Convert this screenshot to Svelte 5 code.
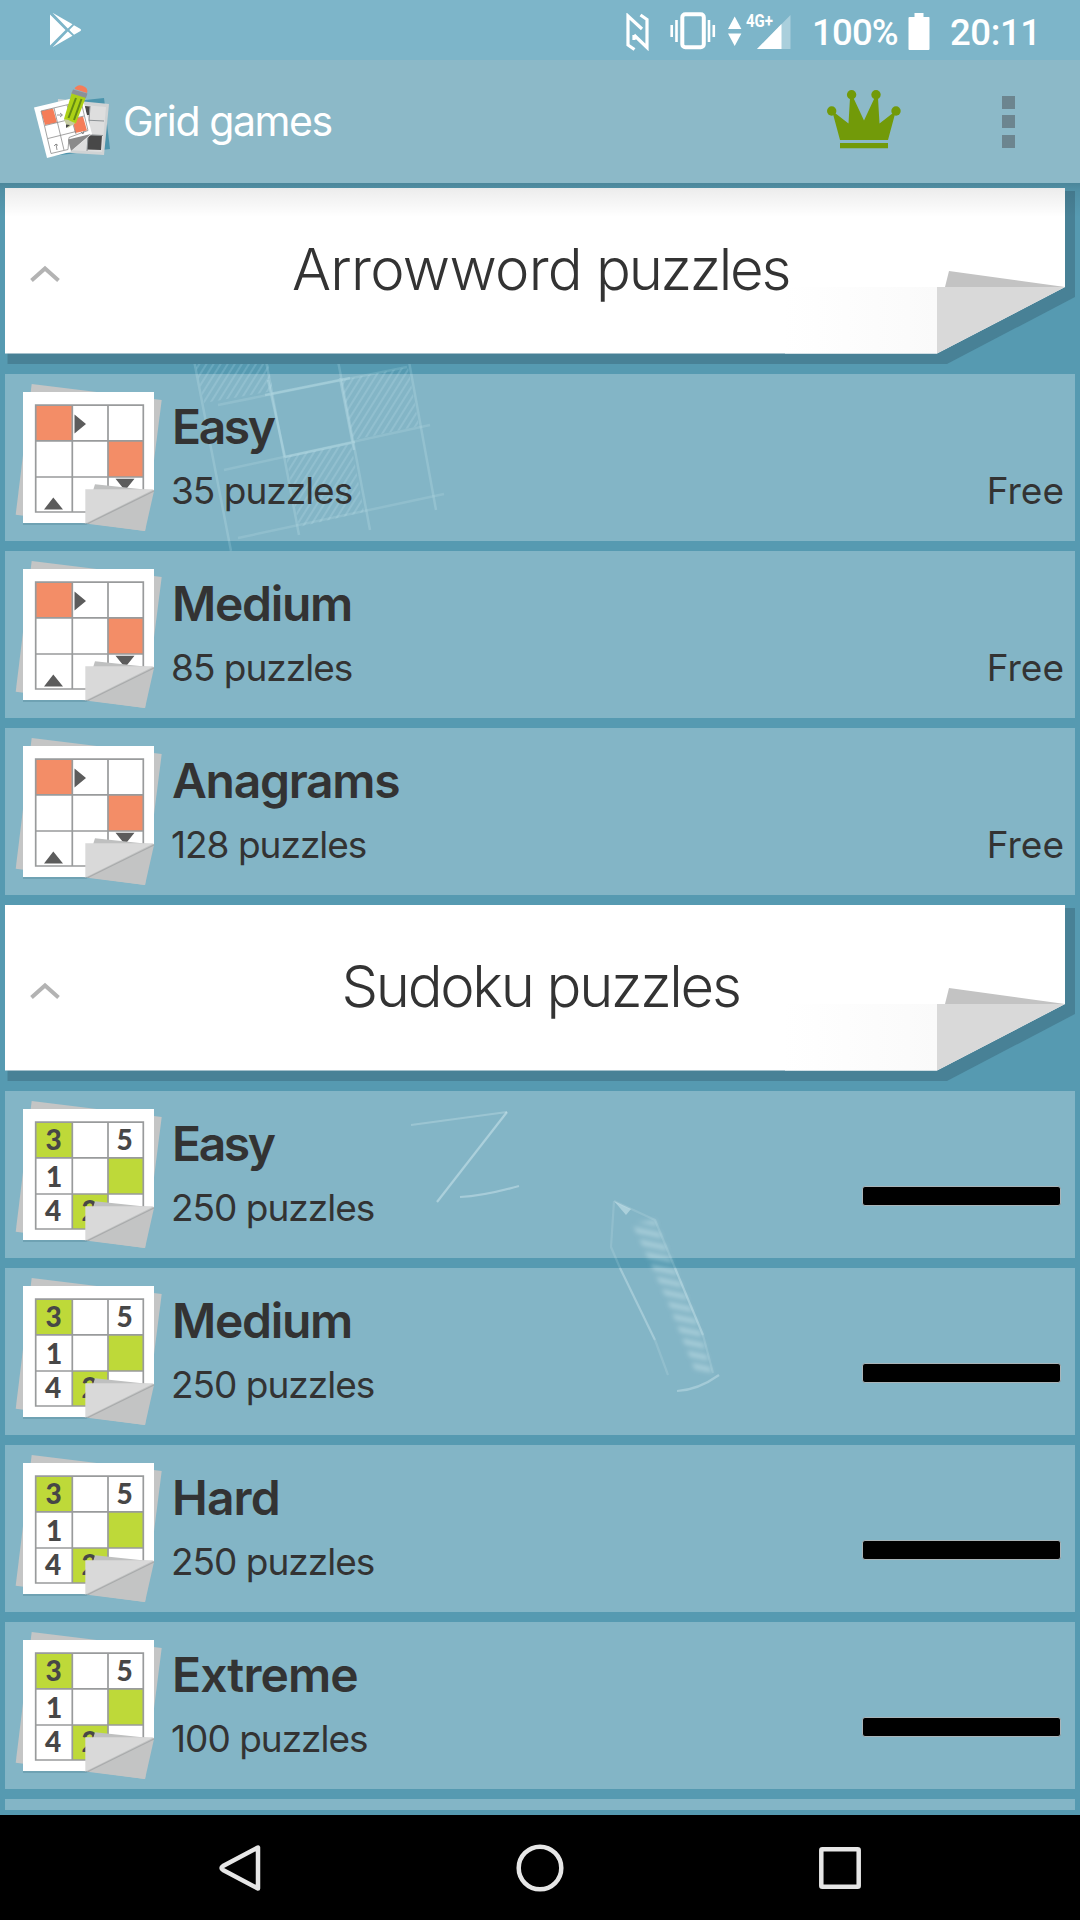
<script>
  const sections = [
    {
      title: 'Arrowword',
      kind: 'arrow',
      packs: [
        { name: 'Easy', count: 35, free: true },
        { name: 'Medium', count: 85, free: true },
        { name: 'Anagrams', count: 128, free: true }
      ]
    },
    {
      title: 'Sudoku',
      kind: 'sudoku',
      packs: [
        { name: 'Easy', count: 250 },
        { name: 'Medium', count: 250 },
        { name: 'Hard', count: 250 },
        { name: 'Extreme', count: 100 }
      ]
    }
  ];

  let open = $state([true, true]);

  function toggle(i) {
    open[i] = !open[i];
  }
</script>

{#snippet packIcon(kind)}
  <svg class="pack-icon" viewBox="0 0 165 167">
    <path d="M26.7 10 156.7 26 140 157 10.7 140.7z" fill="#c4c5c5" />
    <path d="M18 20h131v97L81 151H18z" fill="#4a7f90" opacity=".35" />
    <path d="M18 18h131v98L81 149H18z" fill="#fff" />
    {#if kind === 'arrow'}
      <path d="M31 31h36v36H31zM103 67h35v36h-35z" fill="#f38d67" />
    {:else}
      <path d="M31 31h36v36H31zM103 67h35v36h-35zM67 103h36v35H67z" fill="#bed939" />
    {/if}
    <path d="M30.7 31.2H138.3V138H30.7zM67.3 31v107M103 31v107M31 66.8h107M31 103h107" fill="none" stroke="#999b9c" stroke-width="1.7" />
    {#if kind === 'arrow'}
      <path d="M69.5 40.5v19L81 50zM110.5 104.8h19L120 116.5zM39 135.5h19L48.3 123.5z" fill="#5c5c5c" />
    {:else}
      <g class="digits">
        <text x="48.5" y="58.5">3</text>
        <text x="119.5" y="58.5">5</text>
        <text x="49" y="95.5">1</text>
        <text x="48" y="130">4</text>
        <text x="84.5" y="130">2</text>
      </g>
    {/if}
    <path d="M81 149V116h68v1L140 157 81 149z" fill="#c3c4c4" />
    <path d="M90 110.3 149 116.5H88z" fill="#bfc0c0" />
    <path d="M80.3 115.3H149L80.3 149.5z" fill="#d9d9d9" />
    <path d="M83 149.5 149 117" stroke="#989b9c" stroke-width="1.3" opacity=".6" />
  </svg>
{/snippet}

<div class="screen">
  <div class="status">
    <svg class="play" width="34" height="36" viewBox="0 0 34 36" fill="#fff">
      <path d="M1 2.5 16.5 18 1 33.5zM3.5.8l20 11.5-4.7 4.2zM3.5 35.2l20-11.5-4.7-4.2zM25 13.3l6.5 3.6q1.3 1.1 0 2.2L25 22.7 20.3 18z" />
    </svg>
    <svg class="nfc" width="24" height="38" viewBox="0 0 24 38" fill="none" stroke="#fff" stroke-width="3.2">
      <path d="M16 16 2 3v29l6.5 4.500M8 22 21 34.500V6.500L14.500 2M8 22v5" />
    </svg>
    <svg class="vibrate" width="46" height="38" viewBox="0 0 46 38" fill="none" stroke="#fff">
      <rect x="12.3" y="2.3" width="21.5" height="33" rx="3" stroke-width="4" />
      <path d="M1.7 13v12M6.5 8v22M39 8v22M43.8 13v12" stroke-width="2.6" />
    </svg>
    <svg class="signal" width="64" height="42" viewBox="0 -4 64 42" fill="#fff">
      <path d="M0 17 6.7 4.5 13.4 17zM0 21.5h13.4L6.7 34z" />
      <path d="M29 37 62.5 3v34z" opacity=".35" />
      <path d="M29 37 53.5 12v25z" />
      <text x="18" y="14.5" textLength="27" lengthAdjust="spacingAndGlyphs">4G+</text>
    </svg>
    <span class="percent">100%</span>
    <svg class="battery" width="22" height="38" viewBox="0 0 22 38" fill="#fff">
      <path d="M6.5 1h9v4H21q.5 0 .5 1v31q0 1-1 1h-19q-1 0-1-1V6q0-1 1-1h5z" />
    </svg>
    <span class="clock">20:11</span>
  </div>

  <header class="appbar">
    <svg class="logo" width="82" height="80" viewBox="30 82 82 80">
      <path d="M76 101l28-3 6 51-58 7z" fill="#4c94ac" />
      <path d="M58 99l51 5-5 51-48-3z" fill="#d0d3d4" />
      <path d="M84 105l22 2-4 45-36-2z" fill="#dedede" />
      <path d="M85 106l5 .5-1 8.500h-3zM88 135l14 .5-1 14.500-14-.5z" fill="#484848" />
      <path d="M90 106l-3 45M84 120l20 1M84 134.500l19 1" stroke="#8d9295" fill="none" />
      <path d="M34 107.500 82 96 92 134 70 152 47 158z" fill="#fff" />
      <path d="M41 111l12-2.500 4 14-12 2.500zM73 119l10-2.500 4 14-12 2.500z" fill="#f57d59" />
      <path d="M41 111l40-9.500 7 29-19 7-1 12-17 4zM54 108l10 42M67 105l9 29M45 125.500l39-9.500M48 138.500l28-7" fill="none" stroke="#8b8b8b" stroke-width=".8" />
      <path d="M57 115h5m-2-2 2.500 2-2.500 2M57 150l-1-6m-2 2 2-2 2 1.500M81 132l2 2 1-3" fill="none" stroke="#777" stroke-width=".8" />
      <path d="M68 139.500 91 134 71 151z" fill="#8a8a8a" />
      <path d="M72 92 86 97 76 123 68 126 64 119z" fill="#acd116" />
      <path d="M76 98 68.500 118M81.500 99 74 120" stroke="#648b14" stroke-width="2" />
      <path d="M64 119l4.500 1 4 2 3 1-8 5z" fill="#c5cca0" />
      <path d="M66 124.500l4 .5-4 3z" fill="#444" />
      <path d="M73 89.500 87.500 93.500 86 98 71.500 93.500z" fill="#8b9099" />
      <path d="M74.500 89q2.500-5 8-3.300 6 2 4.500 7.300z" fill="#f57d59" />
    </svg>
    <h1>Grid games</h1>
    <svg class="crown" width="74" height="60" viewBox="0 0 74 60" fill="#729a09">
      <circle cx="4.7" cy="21" r="4.7" />
      <circle cx="24.6" cy="4.7" r="4.7" />
      <circle cx="49" cy="4.7" r="4.7" />
      <circle cx="69" cy="21" r="4.7" />
      <path d="M13 50 6 24l2-1L21.5 33.5 23 8h3.5L37 30.5 47.5 8H51l1.5 25.5L66 23l2 1-7 26zM13 53h48v5.300H13z" />
    </svg>
    <div class="more"><i></i><i></i><i></i></div>
  </header>

  <main class="list">
    <svg class="sketch" viewBox="0 183 1080 1632" fill="none">
      <defs>
        <pattern id="hatch" width="6" height="6" patternUnits="userSpaceOnUse" patternTransform="rotate(32)">
          <path d="M2 0v6" stroke="#b5e2ee" stroke-width="2" opacity=".2" />
        </pattern>
        <pattern id="shade" width="14" height="11" patternUnits="userSpaceOnUse" patternTransform="rotate(12)">
          <path d="M0 4h14" stroke="#c3e3eb" stroke-width="6" opacity=".4" />
        </pattern>
        <filter id="soft"><feGaussianBlur stdDeviation="2" /></filter>
      </defs>
      <path d="M191 345 265 345 273 391 204 403zM341 380 408 367 419 426 353 440zM286 456 351 444 364 512 299 527z" fill="url(#hatch)" />
      <g stroke="#a5d4e1" stroke-width="2.5">
        <path d="M191 345 231 551M263 345 299 535M335 345 370 530M406 345 436 510" opacity=".28" />
        <path d="M218 405 407 367M224 470 430 425M238 538 444 494" opacity=".22" />
        <path d="M268 380 285 457M340 378 354 450M265 395 350 378M285 457 355 442" opacity=".4" />
      </g>
      <g stroke="#c3e3eb" stroke-width="2.2" stroke-linejoin="round">
        <path d="M411 1125Q463 1118 507 1112" opacity=".3" />
        <path d="M507 1112 437 1202" opacity=".5" />
        <path d="M460 1197Q484 1196 519 1186" opacity=".45" />
        <path d="M614 1201 611 1247 620 1268M614 1201 655 1220 675 1268M703 1335 713 1373M655 1340 668 1375" opacity=".18" />
        <path d="M620 1268 655 1340M675 1268 703 1335M677 1391Q698 1390 719 1375" opacity=".4" />
      </g>
      <path d="M614 1201l17 8-5 6z" fill="#c3e3eb" opacity=".5" />
      <path d="M632 1223 655 1220 700 1330 712 1373 696 1373 667 1300z" fill="url(#shade)" filter="url(#soft)" />
    </svg>

    {#each sections as section, i}
      <button class="section {section.kind}" onclick={() => toggle(i)}>
        <svg class="paper" width="1070" height="176" viewBox="0 0 1070 176">
          <defs>
            <linearGradient id="curl{i}">
              <stop offset="0" stop-color="#fff" />
              <stop offset="1" stop-color="#fafafa" />
            </linearGradient>
          </defs>
          <path d="M2.5 3H1070V109L942 176H2.5z" fill="#488196" />
          <path d="M0 0H1060V99L932 165.5H0z" fill="#fff" />
          <path d="M780 99H932v66.5H780z" fill="url(#curl{i})" />
          <path d="M944 83 1060 99H940z" fill="#c3c3c3" />
          <path d="M932 99h128L932 165.5z" fill="#d9d9d9" />
          <path d={open[i] ? 'M26.5 92.5 40 80.5 53.5 92.5' : 'M26.5 80.5 40 92.5 53.5 80.5'} fill="none" stroke="#b3b3b3" stroke-width="4" />
        </svg>
        <span class="section-title"><span>{section.title}</span> puzzles</span>
      </button>
      {#if open[i]}
        {#each section.packs as pack}
          <div class="pack">
            {@render packIcon(section.kind)}
            <div class="info">
              <strong class={pack.name.toLowerCase()}>{pack.name}</strong>
              <span>{pack.count} puzzles</span>
            </div>
            {#if pack.free}
              <span class="price">Free</span>
            {:else}
              <div class="progress"></div>
            {/if}
          </div>
        {/each}
      {/if}
    {/each}
    <div class="pack"></div>
  </main>

  <nav class="navbar">
    <svg width="50" height="50" viewBox="0 0 50 50"><path d="M43 4.5v41L8 27q-3-2 0-4z" /></svg>
    <svg width="50" height="50" viewBox="0 0 50 50"><circle cx="25" cy="25" r="21.3" /></svg>
    <svg width="50" height="50" viewBox="0 0 50 50"><rect x="6.3" y="6.3" width="37.4" height="37.4" rx="1" /></svg>
  </nav>
</div>

<style>
  :global(body) {
    margin: 0;
    background: #000;
  }

  .screen {
    width: 1080px;
    height: 1920px;
    display: flex;
    flex-direction: column;
    overflow: hidden;
    font-family: Inter, 'Open Sans', sans-serif;
    color: #333;
  }

  svg {
    display: block;
    flex: none;
  }

  .status {
    height: 60px;
    display: flex;
    align-items: center;
    background: #7db5c9;
    color: #fff;
    font-family: Roboto, sans-serif;
    font-size: 36.5px;
    font-weight: 500;
    line-height: 60px;
  }

  .play {
    margin-left: 49px;
  }

  .nfc {
    margin-left: 543px;
    margin-top: 3px;
  }

  .vibrate {
    margin-left: 20px;
    margin-top: 1px;
  }

  .signal {
    margin-left: 12px;
    margin-top: -3px;
  }

  .signal text {
    font-size: 18.5px;
    font-weight: 700;
  }

  .percent {
    width: 96px;
    margin-left: 20px;
    padding-top: 6px;
    white-space: nowrap;
    letter-spacing: -0.8px;
  }

  .battery {
    margin-top: 2px;
  }

  .clock {
    margin-left: 20px;
    padding-top: 6px;
    letter-spacing: -0.4px;
  }

  .appbar {
    height: 123px;
    display: flex;
    align-items: center;
    background: #8cb9c8;
  }

  .logo {
    margin-left: 30px;
  }

  h1 {
    flex: 1;
    margin: -2px 0 0 11px;
    color: #fff;
    font-size: 41px;
    font-weight: 400;
    letter-spacing: -1.4px;
  }

  .crown {
    margin-right: 101px;
    margin-top: -3px;
  }

  .more {
    display: flex;
    flex-direction: column;
    gap: 6.5px;
    margin-right: 65px;
  }

  .more i {
    width: 13px;
    height: 13px;
    background: #6c858f;
  }

  .list {
    position: relative;
    height: 1622px;
    padding: 5px 5px 0;
    border-bottom: 5px solid #569ab1;
    background: #569ab1;
    overflow: hidden;
    display: flex;
    flex-direction: column;
    gap: 10px;
  }

  .list::after {
    content: '';
    position: absolute;
    inset: 0 0 auto;
    height: 34px;
    background: linear-gradient(rgba(0, 0, 0, 0.13), rgba(0, 0, 0, 0.07) 20%, transparent);
    pointer-events: none;
  }

  .sketch {
    position: absolute;
    left: 0;
    top: 0;
    width: 1080px;
    height: 1632px;
  }

  .section {
    display: grid;
    flex: none;
    width: 1070px;
    height: 176px;
    padding: 0;
    border: 0;
    background: none;
    color: inherit;
    font: inherit;
    position: relative;
  }

  .paper,
  .section-title {
    grid-area: 1 / 1;
  }

  .section-title {
    position: relative;
    padding: 46px 0 0 1px;
    font-size: 58px;
    font-weight: 340;
    line-height: 70px;
    letter-spacing: -2.3px;
  }

  .arrow .section-title span {
    letter-spacing: -0.7px;
  }

  .pack {
    position: relative;
    flex: none;
    display: flex;
    height: 167px;
    background: rgba(255, 255, 255, 0.27);
  }

  .pack-icon {
    width: 165px;
    height: 167px;
  }

  .digits {
    font-family: Lato, sans-serif;
    font-size: 28px;
    font-weight: 900;
    fill: #474747;
    text-anchor: middle;
  }

  .info {
    flex: 1;
    display: flex;
    flex-direction: column;
    padding: 22px 0 0 2px;
  }

  .info strong {
    font-size: 48px;
    font-weight: 560;
    line-height: 62px;
    letter-spacing: -1.3px;
  }

  .info strong.easy {
    letter-spacing: -2.4px;
  }

  .info strong.hard,
  .info strong.extreme {
    letter-spacing: -0.9px;
  }

  .info span,
  .price {
    font-size: 37px;
    line-height: 48px;
    letter-spacing: -1px;
  }

  .info span {
    margin-top: 9px;
    margin-left: -1px;
  }

  .price {
    margin-top: 93px;
    margin-right: 11px;
    letter-spacing: 0;
  }

  .progress {
    width: 197px;
    height: 18px;
    margin: 95px 14px 0 0;
    border: 1px solid #a9b4b8;
    border-radius: 3px;
    background: #000;
  }

  .navbar {
    flex: 1;
    display: flex;
    justify-content: center;
    align-items: center;
    gap: 250px;
    background: #000;
  }

  .navbar svg {
    fill: none;
    stroke: #e6e6e6;
    stroke-width: 4.5;
    stroke-linejoin: round;
  }
</style>
